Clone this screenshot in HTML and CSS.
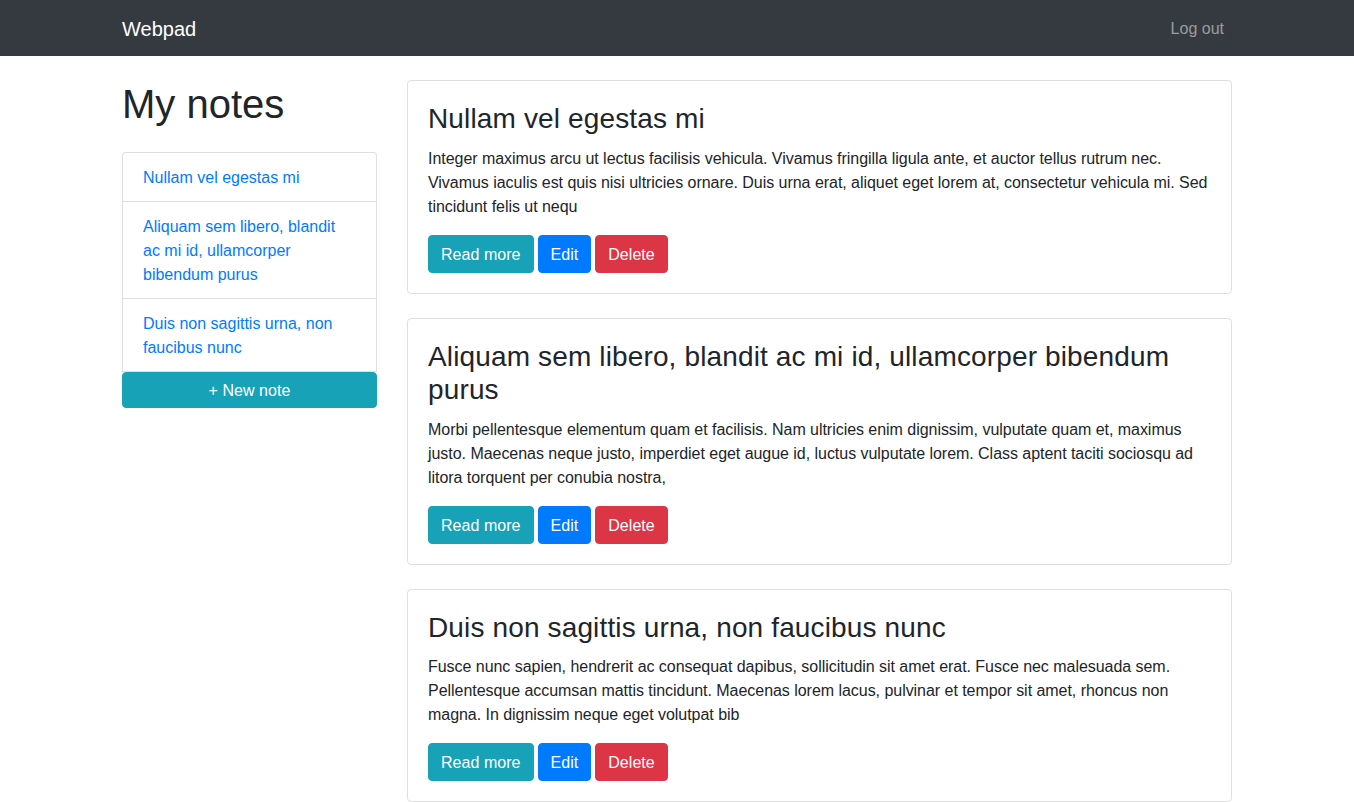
FILE: index.html
```html
<!DOCTYPE html>
<html lang="en">
<head>
<meta charset="utf-8">
<title>Webpad</title>
<link rel="stylesheet" href="styles.css">
</head>
<body>
<nav class="navbar">
  <div class="container nav-inner">
    <a class="brand" href="#">Webpad</a>
    <a class="nav-link" href="#">Log out</a>
  </div>
</nav>
<div class="container main">
  <div class="row">
    <div class="col-side">
      <h1 class="page-title">My notes</h1>
      <div class="list-group">
        <a class="list-item" href="#">Nullam vel egestas mi</a>
        <a class="list-item" href="#">Aliquam sem libero, blandit ac mi id, ullamcorper bibendum purus</a>
        <a class="list-item" href="#">Duis non sagittis urna, non faucibus nunc</a>
        <a class="btn btn-info btn-block" href="#">+ New note</a>
      </div>
    </div>
    <div class="col-main">
      <div class="card">
        <h3 class="card-title">Nullam vel egestas mi</h3>
        <p class="card-text">Integer maximus arcu ut lectus facilisis vehicula. Vivamus fringilla ligula ante, et auctor tellus rutrum nec. Vivamus iaculis est quis nisi ultricies ornare. Duis urna erat, aliquet eget lorem at, consectetur vehicula mi. Sed tincidunt felis ut nequ</p>
        <div class="actions">
          <a class="btn btn-info" href="#">Read more</a>
          <a class="btn btn-primary" href="#">Edit</a>
          <a class="btn btn-danger" href="#">Delete</a>
        </div>
      </div>
      <div class="card">
        <h3 class="card-title">Aliquam sem libero, blandit ac mi id, ullamcorper bibendum purus</h3>
        <p class="card-text">Morbi pellentesque elementum quam et facilisis. Nam ultricies enim dignissim, vulputate quam et, maximus justo. Maecenas neque justo, imperdiet eget augue id, luctus vulputate lorem. Class aptent taciti sociosqu ad litora torquent per conubia nostra,</p>
        <div class="actions">
          <a class="btn btn-info" href="#">Read more</a>
          <a class="btn btn-primary" href="#">Edit</a>
          <a class="btn btn-danger" href="#">Delete</a>
        </div>
      </div>
      <div class="card">
        <h3 class="card-title">Duis non sagittis urna, non faucibus nunc</h3>
        <p class="card-text">Fusce nunc sapien, hendrerit ac consequat dapibus, sollicitudin sit amet erat. Fusce nec malesuada sem. Pellentesque accumsan mattis tincidunt. Maecenas lorem lacus, pulvinar et tempor sit amet, rhoncus non magna. In dignissim neque eget volutpat bib</p>
        <div class="actions">
          <a class="btn btn-info" href="#">Read more</a>
          <a class="btn btn-primary" href="#">Edit</a>
          <a class="btn btn-danger" href="#">Delete</a>
        </div>
      </div>
    </div>
  </div>
</div>
</body>
</html>
```

FILE: styles.css
```css
* { box-sizing: border-box; }
html, body { margin: 0; }
body {
  font-family: "Liberation Sans", Arial, sans-serif;
  font-size: 16px;
  line-height: 1.5;
  color: #212529;
  background: #fff;
}
a { text-decoration: none; }
.container {
  max-width: 1140px;
  margin: 0 auto;
  padding: 0 15px;
}
.navbar {
  background: #343a40;
  padding: 8px 0;
}
.nav-inner {
  display: flex;
  justify-content: space-between;
  align-items: center;
}
.brand {
  color: #fff;
  font-size: 20px;
  line-height: 30px;
  padding: 6px 0 4px;
}
.nav-link {
  color: rgba(255,255,255,.5);
  padding: 9px 8px 7px;
  line-height: 24px;
}
.main { margin-top: 24px; }
.row {
  display: flex;
  margin: 0 -15px;
}
.col-side { flex: 0 0 25%; max-width: 25%; padding: 0 15px; }
.col-main { flex: 0 0 75%; max-width: 75%; padding: 0 15px; }
.page-title {
  font-size: 40px;
  font-weight: 500;
  line-height: 1.2;
  margin: 0 0 24px;
}
.list-group {
  display: flex;
  flex-direction: column;
}
.list-item {
  display: block;
  color: #007bff;
  padding: 13px 20px 11px;
  border: 1px solid rgba(0,0,0,.125);
  margin-bottom: -1px;
  background: #fff;
}
.list-item:first-child { border-radius: 4px 4px 0 0; }
.list-item:nth-child(3) { margin-bottom: 0; }
.btn {
  display: inline-block;
  color: #fff;
  padding: 7px 12px 5px;
  border: 1px solid transparent;
  border-radius: 4px;
  line-height: 24px;
  font-size: 16px;
  text-align: center;
  letter-spacing: 0.04px;
}
.btn-block {
  display: block;
  padding: 6px 12px 4px;
  border-radius: 4px;
}
.btn-info { background: #17a2b8; border-color: #17a2b8; }
.btn-primary { background: #007bff; border-color: #007bff; }
.btn-danger { background: #dc3545; border-color: #dc3545; }
.card {
  border: 1px solid rgba(0,0,0,.125);
  border-radius: 4px;
  padding: 20px;
  margin-bottom: 24px;
}
.card-title {
  font-size: 28px;
  font-weight: 500;
  line-height: 1.2;
  margin: 0 0 12px;
  padding-top: 1px;
  margin-bottom: 11px;
  letter-spacing: 0.14px;
}
.card-text { margin: 0 0 16px; letter-spacing: -0.04px; }
.actions { display: flex; gap: 4px; }
```
